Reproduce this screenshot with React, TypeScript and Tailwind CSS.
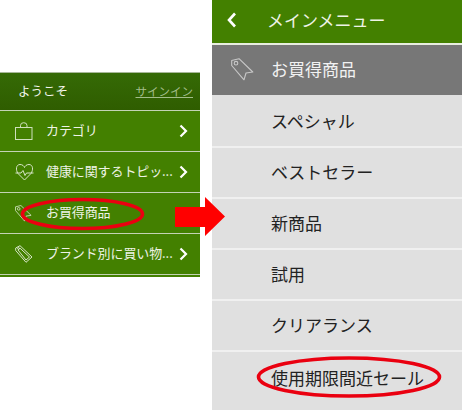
const font = { fontFamily: '"Noto Sans CJK JP", "Liberation Sans", sans-serif' };

function Chevron({ className = "" }: { className?: string }) {
  return (
    <svg width="9" height="14" viewBox="0 0 9 14" className={className}>
      <path d="M1.5 1.5 L7 7 L1.5 12.5" fill="none" stroke="#ffffff" strokeWidth="2.2" />
    </svg>
  );
}

function BagIcon() {
  return (
    <svg width="18" height="18" viewBox="0 0 18 18" fill="none" stroke="#cfe0bd" strokeWidth="1">
      <rect x="0.5" y="5.5" width="16.5" height="12" />
      <path d="M5.5 5.5 V3.5 Q5.5 0.7 8.7 0.7 Q12 0.7 12 3.5 V5.5" />
    </svg>
  );
}

function HeartIcon() {
  return (
    <svg width="19" height="19" viewBox="0 0 19 19" fill="none" stroke="#d7e5c8" strokeWidth="1">
      <path d="M3 10.5 C0.5 7 1 1.5 5 1.5 C7.5 1.5 9 3 9.5 4.5 C10 3 11.5 1.5 14 1.5 C18 1.5 18.5 7 16 10.5 L9.5 17 Z" />
      <path d="M0.5 10 H6 L8 7.5 L10 12.5 L11.5 10 H18.5" />
    </svg>
  );
}

function TagIcon({ size = 22, color = "#d7e5c8" }: { size?: number; color?: string }) {
  return (
    <svg width={size} height={size} viewBox="0 0 23 23" fill="none" stroke={color} strokeWidth="1.1">
      <path d="M0.7 2.5 L8 0.7 L21.8 14 L15 15 L13 21.8 L0.7 7.5 Z" strokeLinejoin="round" />
      <circle cx="5" cy="5.2" r="1.8" />
    </svg>
  );
}

function BrandTagIcon() {
  return (
    <svg width="18" height="18" viewBox="0 0 18 18" fill="none" stroke="#d7e5c8" strokeWidth="1">
      <path d="M0.7 3 L5 0.7 L17 12 L11 17.3 L0.7 5.5 Z" strokeLinejoin="round" />
      <path d="M3 5 L5 3.2 L14.5 12 L11 15 Z" />
      <circle cx="3.5" cy="3.5" r="0.9" />
    </svg>
  );
}

function LeftRow({ icon, label, chevron = true }: { icon: React.ReactNode; label: string; chevron?: boolean }) {
  return (
    <div className="flex h-[41px] items-center border-t border-[#c4d3b4] pl-[15px] pr-[12px]">
      <div className="flex w-[31px] shrink-0 items-center">{icon}</div>
      <div className="min-w-0 flex-1 whitespace-nowrap pb-[2px] text-[13px] tracking-[-0.1px] text-[#eef3e6]">{label}</div>
      {chevron && <Chevron className="shrink-0" />}
    </div>
  );
}

function RightRow({ label }: { label: string }) {
  return (
    <div className="flex h-[51px] items-center border-b-2 border-[#f0f0f0] pb-[2px] pl-[59px] text-[17px] text-[#222222]">
      {label}
    </div>
  );
}

export default function App() {
  return (
    <div className="relative flex h-[410px] w-[462px] items-start overflow-hidden bg-white" style={font}>
      <div className="mt-[72px] flex h-[205px] w-[200px] flex-col overflow-hidden bg-[#438000]">
        <div className="flex h-[38px] shrink-0 items-center justify-between border-t border-[#a8b89a] bg-gradient-to-b from-[#356a06] to-[#2f5d00] pl-[18px] pr-[7px]">
          <span className="text-[12.5px] text-[#f2f5ec]">ようこそ</span>
          <span className="text-[11.5px] text-[#a3bd8a] underline">サインイン</span>
        </div>
        <LeftRow icon={<BagIcon />} label="カテゴリ" />
        <LeftRow icon={<HeartIcon />} label="健康に関するトピッ..." />
        <LeftRow icon={<TagIcon size={17} />} label="お買得商品" chevron={false} />
        <LeftRow icon={<BrandTagIcon />} label="ブランド別に買い物..." />
        <div className="flex-1 border-t border-[#c4d3b4]" />
      </div>

      <div className="ml-[12px] flex h-[410px] w-[250px] flex-col bg-[#e0e0e0]">
        <div className="flex h-[43px] shrink-0 items-center bg-[#438000] pb-[4px] pl-[15px] text-[17px] text-[#eef3e6]">
          <svg width="10" height="16" viewBox="0 0 10 16" className="mr-[30px]">
            <path d="M8 1.5 L2 8 L8 14.5" fill="none" stroke="#ffffff" strokeWidth="2.6" />
          </svg>
          メインメニュー
        </div>
        <div className="mb-[2px] flex h-[52px] shrink-0 items-center border-t-2 border-t-[#e8eee0] bg-[#777777] pb-[2px] pl-[19px] text-[17px] text-[#f2f2f2]">
          <div className="w-[40px] shrink-0">
            <TagIcon size={23} color="#c8c8c8" />
          </div>
          お買得商品
        </div>
        <RightRow label="スペシャル" />
        <RightRow label="ベストセラー" />
        <RightRow label="新商品" />
        <RightRow label="試用" />
        <RightRow label="クリアランス" />
        <div className="flex flex-1 items-center pb-[7px] pl-[59px] text-[17px] text-[#222222]">使用期限間近セール</div>
      </div>

      <svg className="absolute left-[175px] top-[197px]" width="50" height="39" viewBox="0 0 50 39">
        <path d="M0 10 H30 V0 L50 19.5 L30 39 V30 H0 Z" fill="#ff0000" />
      </svg>
      <svg className="absolute left-[18px] top-[194px]" width="128" height="40" viewBox="0 0 128 40">
        <ellipse cx="64.5" cy="20" rx="60" ry="14.5" fill="none" stroke="#ea0010" strokeWidth="3.6" />
      </svg>
      <svg className="absolute left-[255px] top-[354px]" width="190" height="46" viewBox="0 0 190 46">
        <ellipse cx="94" cy="23" rx="90.5" ry="19" fill="none" stroke="#ea0010" strokeWidth="3.6" />
      </svg>
    </div>
  );
}
